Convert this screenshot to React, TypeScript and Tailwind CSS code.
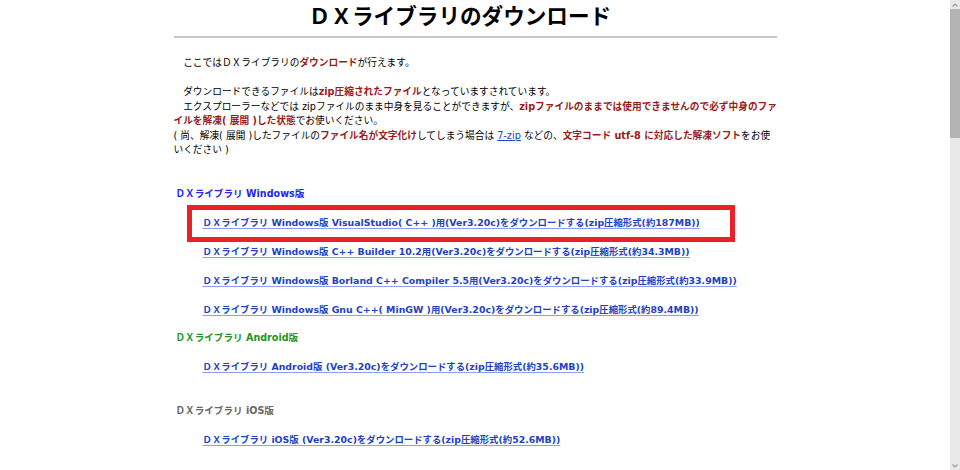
import React from 'react';

const Red: React.FC<{ children: React.ReactNode }> = ({ children }) => (
    <span className="text-[#9b1b1b] font-bold">{children}</span>
);

const DlLink: React.FC<{ children: React.ReactNode }> = ({ children }) => (
    <a
        href="#"
        className="font-bold text-[#2341c4] underline decoration-[#8d9df0] underline-offset-2"
    >
        {children}
    </a>
);

const sp = '\u3000';

const sections = [
    {
        title: 'ＤＸライブラリ Windows版',
        color: 'text-[#2626f0]',
        gap: 'mt-[29px]',
        links: [
            'ＤＸライブラリ Windows版 VisualStudio( C++ )用(Ver3.20c)をダウンロードする(zip圧縮形式(約187MB))',
            'ＤＸライブラリ Windows版 C++ Builder 10.2用(Ver3.20c)をダウンロードする(zip圧縮形式(約34.3MB))',
            'ＤＸライブラリ Windows版 Borland C++ Compiler 5.5用(Ver3.20c)をダウンロードする(zip圧縮形式(約33.9MB))',
            'ＤＸライブラリ Windows版 Gnu C++( MinGW )用(Ver3.20c)をダウンロードする(zip圧縮形式(約89.4MB))',
        ],
    },
    {
        title: 'ＤＸライブラリ Android版',
        color: 'text-[#1e961e]',
        gap: 'mt-[14px]',
        links: ['ＤＸライブラリ Android版 (Ver3.20c)をダウンロードする(zip圧縮形式(約35.6MB))'],
    },
    {
        title: 'ＤＸライブラリ iOS版',
        color: 'text-[#666666]',
        gap: 'mt-[29px]',
        links: ['ＤＸライブラリ iOS版 (Ver3.20c)をダウンロードする(zip圧縮形式(約52.6MB))'],
    },
];

const App: React.FC = () => {
    return (
        <div
            className="flex h-[470px] overflow-hidden bg-white text-black"
            style={{ fontFamily: '"DejaVu Sans", "Noto Sans CJK JP", sans-serif' }}
        >
            <main className="flex-1">
                <div className="mx-auto w-[603px]">
                    <h1 className="pt-[3px] pr-[30px] text-center text-[21.6px] font-bold leading-[28px]">
                        ＤＸライブラリのダウンロード
                    </h1>
                    <hr className="mt-[5px] border-t-2 border-[#c8c8c8]" />

                    <p className="mt-[18px] w-[606px] text-[9.7px] leading-[14.5px]">
                        {sp}ここではＤＸライブラリの<Red>ダウンロード</Red>が行えます。
                        <br />
                        <br />
                        {sp}ダウンロードできるファイルは<Red>zip圧縮されたファイル</Red>となっていますされています。
                        <br />
                        {sp}エクスプローラーなどでは zipファイルのまま中身を見ることができますが、
                        <Red>zipファイルのままでは使用できませんので必ず中身のファイルを解凍( 展開 )した状態</Red>
                        でお使いください。
                        <br />
                        ( 尚、解凍( 展開 )したファイルの<Red>ファイル名が文字化け</Red>してしまう場合は{' '}
                        <a href="#" className="text-[#2341c4] underline">7-zip</a> などの、
                        <Red>文字コード utf-8 に対応した解凍ソフト</Red>をお使いください )
                    </p>

                    {sections.map((s, i) => (
                        <section key={s.title} className={i === 0 ? 'mt-[29px]' : s.gap}>
                            <h2 className={`pl-[2px] text-[9.6px] font-bold leading-[14.5px] ${s.color}`}>
                                {s.title}
                            </h2>
                            <ul className="pl-[29px] text-[9.4px] leading-[14.5px]">
                                {s.links.map((l, j) => (
                                    <li key={l} className="relative mt-[14.5px]">
                                        <DlLink>{l}</DlLink>
                                        {i === 0 && j === 0 && (
                                            <div className="pointer-events-none absolute top-[-11px] left-[-16px] h-[37px] w-[548px] border-[5px] border-[#e8212b]" />
                                        )}
                                    </li>
                                ))}
                            </ul>
                        </section>
                    ))}
                </div>
            </main>

            {/* scrollbar */}
            <div className="flex w-[10px] flex-col bg-[#e8e8e8]">
                <div className="flex h-[9px] items-center justify-center">
                    <svg width="6" height="4" viewBox="0 0 6 4">
                        <path d="M0.5 3.5 L3 1 L5.5 3.5" fill="none" stroke="#9a9a9a" strokeWidth="1.2" />
                    </svg>
                </div>
                <div className="h-[129px] bg-[#b4b4b4]" />
                <div className="flex-1" />
                <div className="flex h-[9px] items-center justify-center">
                    <svg width="6" height="4" viewBox="0 0 6 4">
                        <path d="M0.5 0.5 L3 3 L5.5 0.5" fill="none" stroke="#9a9a9a" strokeWidth="1.2" />
                    </svg>
                </div>
            </div>
        </div>
    );
};

export default App;
